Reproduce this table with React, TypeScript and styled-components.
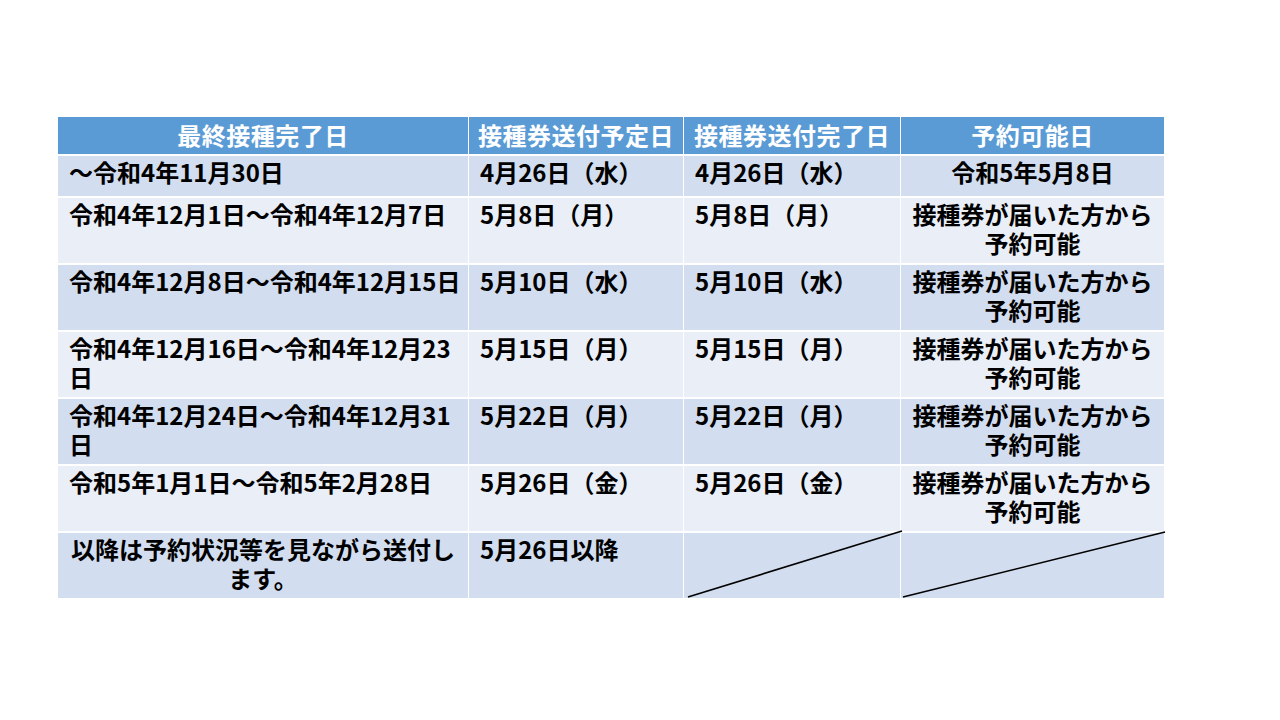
import React from "react";
import styled, { createGlobalStyle } from "styled-components";

const Global = createGlobalStyle`
  html, body { margin: 0; padding: 0; background: #ffffff; }
  body { font-family: "Noto Sans CJK JP", "Noto Sans", sans-serif; }
`;

const Page = styled.div`
  width: 1280px;
  height: 720px;
  padding: 117px 0 0 58px;
  box-sizing: border-box;
`;

const Grid = styled.div`
  display: grid;
  grid-template-columns: 410px 214px 216px 263px;
  grid-template-rows: 37px 40px repeat(6, 65px);
  column-gap: 1px;
  row-gap: 2px;
  width: max-content;
`;

const Head = styled.div`
  background: #5b9bd5;
  color: #ffffff;
  font-weight: 700;
  font-size: 24px;
  line-height: 29px;
  display: flex;
  align-items: center;
  justify-content: center;
  padding-bottom: 3px;
  box-sizing: border-box;
  letter-spacing: 0.5px;
  white-space: nowrap;
`;

const Cell = styled.div<{ $band: boolean; $center?: boolean }>`
  position: relative;
  background: ${(p) => (p.$band ? "#d2ddef" : "#e9eef7")};
  color: #000000;
  font-weight: 700;
  font-size: 24px;
  line-height: 29px;
  padding: 1px 4px 0 ${(p) => (p.$center ? "4px" : "11px")};
  text-align: ${(p) => (p.$center ? "center" : "left")};
  text-spacing-trim: space-all;
  white-space: nowrap;
  box-sizing: border-box;
`;

const Slash = styled.svg`
  position: absolute;
  left: 0;
  top: 0;
  overflow: visible;
  pointer-events: none;
`;

type Row = [React.ReactNode, string, string, React.ReactNode];

const reserve = (
  <>
    接種券が届いた方から
    <br />
    予約可能
  </>
);

const rows: Row[] = [
  ["〜令和4年11月30日", "4月26日（水）", "4月26日（水）", "令和5年5月8日"],
  ["令和4年12月1日〜令和4年12月7日", "5月8日（月）", "5月8日（月）", reserve],
  ["令和4年12月8日〜令和4年12月15日", "5月10日（水）", "5月10日（水）", reserve],
  [
    <>
      令和4年12月16日〜令和4年12月23
      <br />日
    </>,
    "5月15日（月）",
    "5月15日（月）",
    reserve,
  ],
  [
    <>
      令和4年12月24日〜令和4年12月31
      <br />日
    </>,
    "5月22日（月）",
    "5月22日（月）",
    reserve,
  ],
  ["令和5年1月1日〜令和5年2月28日", "5月26日（金）", "5月26日（金）", reserve],
];

export default function App() {
  return (
    <>
      <Global />
      <Page>
        <Grid>
          <Head>最終接種完了日</Head>
          <Head>接種券送付予定日</Head>
          <Head>接種券送付完了日</Head>
          <Head>予約可能日</Head>
          {rows.map((r, i) => {
            const band = i % 2 === 0;
            return (
              <React.Fragment key={i}>
                <Cell $band={band}>{r[0]}</Cell>
                <Cell $band={band}>{r[1]}</Cell>
                <Cell $band={band}>{r[2]}</Cell>
                <Cell $band={band} $center>
                  {r[3]}
                </Cell>
              </React.Fragment>
            );
          })}
          <Cell $band $center>
            以降は予約状況等を見ながら送付し
            <br />
            ます。
          </Cell>
          <Cell $band>5月26日以降</Cell>
          <Cell $band>
            <Slash width="216" height="65">
              <line x1="4" y1="64" x2="218" y2="-2" stroke="#000" strokeWidth="1.6" />
            </Slash>
          </Cell>
          <Cell $band>
            <Slash width="263" height="65">
              <line x1="2" y1="64" x2="264" y2="-1" stroke="#000" strokeWidth="1.6" />
            </Slash>
          </Cell>
        </Grid>
      </Page>
    </>
  );
}
